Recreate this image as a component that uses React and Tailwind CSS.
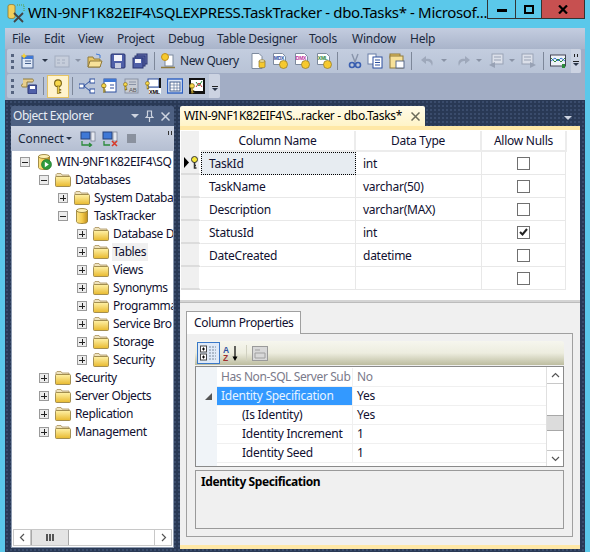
import React from 'react'

const Drop = ({ gray }) => (
  <svg width="6" height="4" viewBox="0 0 6 4" className="shrink-0"><path d="M0 0h6L3 3z" fill={gray ? '#8a93a6' : '#2a3548'} /></svg>
)

const Grip = () => (
  <div className="flex flex-col gap-[3px] ml-[4px] w-[3px] shrink-0">
    <div className="h-[3px] bg-[#56647f]" /><div className="h-[3px] bg-[#56647f]" /><div className="h-[3px] bg-[#56647f]" />
  </div>
)

const Sep = ({ cls }) => <div className={'w-px h-[18px] bg-[#7d8799] shrink-0 ' + cls} />

const Folder = () => (
  <svg width="16" height="14" viewBox="0 0 16 14" className="shrink-0">
    <defs><linearGradient id="fold" x1="0" y1="0" x2="0" y2="1"><stop offset="0" stopColor="#fff2a8" /><stop offset="1" stopColor="#e8b92e" /></linearGradient></defs>
    <path d="M1 3V1.500L2 .5h4l1 1.500h7v2H1z" fill="#efe3bd" stroke="#a8905a" strokeWidth=".8" />
    <rect x=".5" y="3.500" width="15" height="10" rx="1" fill="url(#fold)" stroke="#8f7a3c" strokeWidth=".8" />
  </svg>
)

const Db = ({ play }) => (
  <svg width="16" height="16" viewBox="0 0 16 16" className="shrink-0">
    <defs><linearGradient id="dbg" x1="0" y1="0" x2="1" y2="0"><stop offset="0" stopColor="#fbe58a" /><stop offset=".5" stopColor="#f5cc4c" /><stop offset="1" stopColor="#c08f1c" /></linearGradient></defs>
    <path d="M2.500 2.500v11c0 1 1.500 2 5.500 2s5.500-1 5.500-2v-11z" fill="url(#dbg)" stroke="#8d7428" strokeWidth=".8" />
    <ellipse cx="8" cy="2.500" rx="5.500" ry="2" fill="#fdf0b4" stroke="#8d7428" strokeWidth=".8" />
    {play && <><circle cx="10.500" cy="10.500" r="5" fill="#2e9a3c" stroke="#1c6b28" strokeWidth=".6" /><path d="M8.800 7.800l4 2.700-4 2.700z" fill="#fff" /></>}
  </svg>
)

const Key = ({ x = 0, y = 0, s = 1 }) => (
  <g transform={`translate(${x} ${y}) scale(${s})`}>
    <circle cx="4" cy="4" r="3.200" fill="#f8d84a" stroke="#7a6418" strokeWidth="1" />
    <rect x="3.300" y="6.500" width="1.800" height="7" fill="#f8d84a" stroke="#7a6418" strokeWidth=".6" />
    <rect x="5" y="9.500" width="2" height="1.300" fill="#7a6418" />
    <rect x="5" y="12" width="2" height="1.300" fill="#7a6418" />
  </g>
)

const Win = ({ children }) => (
  <svg width="16" height="16" viewBox="0 0 16 16" className="shrink-0">{children}</svg>
)

const Doc = ({ label, color = '#2c4f9e' }) => (
  <Win>
    <path d="M1.500 .5h9l3 3v8h-12z" fill="#fff" stroke="#7d8a9e" />
    <text x="1.800" y="7" fontSize="5" fontWeight="700" fill={color} fontFamily="Liberation Sans, sans-serif">{label}</text>
    <circle cx="11.500" cy="11.500" r="4" fill="#f6c92e" stroke="#8d7428" strokeWidth=".7" />
  </Win>
)

const Box = ({ minus }) => (
  <div className="w-[10px] h-[10px] border border-[#9a9a9a] bg-[#ececec] flex items-center justify-center shrink-0 relative">
    <div className="w-[6px] h-px bg-[#222]" />
    {!minus && <div className="absolute w-px h-[6px] bg-[#222]" />}
  </div>
)

const Row = ({ pad, icon, label, minus, hover }) => (
  <div className={'flex items-center h-[18px] whitespace-nowrap ' + pad}>
    <Box minus={minus} />
    <div className="w-[16px] ml-[6px] mr-[3px] flex justify-center shrink-0">{icon}</div>
    <span className={hover ? 'bg-[#f0f0f0] px-[1px] h-[18px] leading-[18px] pr-[2px]' : 'px-[1px] leading-[18px]'}>{label}</span>
  </div>
)

// labels are cut where the panel cuts them in the picture
const Tree = () => (
  <div className="flex-1 overflow-hidden pt-[2px] text-[12px] text-[#101030] tracking-[-0.4px]">
    <Row pad="pl-[8px]" minus icon={<Db play />} label="WIN-9NF1K82EIF4\SQ" />
    <Row pad="pl-[27px]" minus icon={<Folder />} label="Databases" />
    <Row pad="pl-[46px]" icon={<Folder />} label="System Databa" />
    <Row pad="pl-[46px]" minus icon={<Db />} label="TaskTracker" />
    <Row pad="pl-[65px]" icon={<Folder />} label="Database D" />
    <Row pad="pl-[65px]" hover icon={<Folder />} label="Tables" />
    <Row pad="pl-[65px]" icon={<Folder />} label="Views" />
    <Row pad="pl-[65px]" icon={<Folder />} label="Synonyms" />
    <Row pad="pl-[65px]" icon={<Folder />} label="Programma" />
    <Row pad="pl-[65px]" icon={<Folder />} label="Service Bro" />
    <Row pad="pl-[65px]" icon={<Folder />} label="Storage" />
    <Row pad="pl-[65px]" icon={<Folder />} label="Security" />
    <Row pad="pl-[27px]" icon={<Folder />} label="Security" />
    <Row pad="pl-[27px]" icon={<Folder />} label="Server Objects" />
    <Row pad="pl-[27px]" icon={<Folder />} label="Replication" />
    <Row pad="pl-[27px]" icon={<Folder />} label="Management" />
  </div>
)

const Chevron = ({ d }) => (
  <svg width="9" height="9" viewBox="0 0 9 9"><path d={d} fill="none" stroke="#555" strokeWidth="1.200" /></svg>
)

const ObjectExplorer = () => (
  <div className="w-[163px] shrink-0 flex flex-col h-[442px] mt-[6px] ml-[6px]">
    <div className="h-[20px] bg-[#4d6082] rounded-t-[2px] flex items-center pl-[2px] pr-[3px] text-[12px] text-white shrink-0">
      <span className="flex-1 text-[#e8edf5] tracking-[-0.45px]">Object Explorer</span>
      <svg width="8" height="5" viewBox="0 0 8 5" className="mr-[6px]"><path d="M0 0h8L4 4z" fill="#ced4e0" /></svg>
      <svg width="9" height="12" viewBox="0 0 9 12" className="mr-[7px]"><path d="M2.500 1h4v5l1.500 1.500H1L2.500 6zM4.500 7.500V12" fill="none" stroke="#ced4e0" strokeWidth="1.200" /></svg>
      <svg width="9" height="9" viewBox="0 0 9 9" className="mr-[1px]"><path d="M.5 .5l8 8M8.500 .5l-8 8" stroke="#ced4e0" strokeWidth="1.500" /></svg>
    </div>
    <div className="h-[25px] bg-gradient-to-b from-[#ccd3e2] to-[#b5bfd2] flex items-center shrink-0 text-[12px] text-[#1b293e]">
      <span className="ml-[7px] w-[45px] tracking-[-0.1px]">Connect</span>
      <div className="ml-[3px]"><Drop /></div>
      <div className="ml-[8px]">
        <Win>
          <rect x="1" y="1" width="9" height="7" fill="#3f78d6" stroke="#27427c" />
          <rect x="11" y="1" width="4" height="9" fill="#e6e9f0" stroke="#717a8c" strokeWidth=".7" />
          <path d="M2 10v4h9M9 12l2.500 2L9 16" fill="none" stroke="#2b8a3a" strokeWidth="1.300" />
        </Win>
      </div>
      <div className="ml-[6px]">
        <Win>
          <rect x="1" y="1" width="9" height="7" fill="#3f78d6" stroke="#27427c" />
          <rect x="11" y="1" width="4" height="9" fill="#e6e9f0" stroke="#717a8c" strokeWidth=".7" />
          <path d="M2 10v4h6" fill="none" stroke="#2b8a3a" strokeWidth="1.300" />
          <path d="M10 10l5 5M15 10l-5 5" stroke="#d83a2a" strokeWidth="1.600" />
        </Win>
      </div>
      <div className="ml-[9px] w-[9px] h-[9px] bg-[#8a919e]" />
      <div className="ml-auto mr-[2px] mb-[12px] flex gap-[2px]"><div className="w-[1px] h-[4px] bg-[#333]" /><div className="w-[1px] h-[4px] bg-[#333]" /></div>
    </div>
    <div className="flex-1 min-h-0 bg-white border-x border-b border-[#8e9bb0] flex flex-col">
      <Tree />
      <div className="h-[17px] mx-[1px] mb-[1px] flex border border-[#c8c8c8] bg-white shrink-0">
        <div className="w-[17px] flex items-center justify-center border-r border-[#c8c8c8]"><Chevron d="M6 1L2.500 4.500 6 8" /></div>
        <div className="w-[38px] bg-[#e4e4e4] border-x border-[#a8a8a8] flex items-center justify-center gap-[1px]">
          <div className="w-[2px] h-[7px] bg-[#555]" /><div className="w-[2px] h-[7px] bg-[#555]" /><div className="w-[2px] h-[7px] bg-[#555]" />
        </div>
        <div className="flex-1" />
        <div className="w-[17px] flex items-center justify-center border-l border-[#c8c8c8]"><Chevron d="M3 1l3.500 3.500L3 8" /></div>
      </div>
    </div>
  </div>
)

const columns = [
  { name: 'TaskId', type: 'int', nulls: false, focus: true },
  { name: 'TaskName', type: 'varchar(50)', nulls: false },
  { name: 'Description', type: 'varchar(MAX)', nulls: false },
  { name: 'StatusId', type: 'int', nulls: true },
  { name: 'DateCreated', type: 'datetime', nulls: false },
  { name: '', type: '', nulls: false },
]

const DesignGrid = () => (
  <div className="h-[170px] bg-white shrink-0 pl-[1px] pt-[1px] text-[12px] text-[#101030]">
    <div className="flex h-[21px]">
      <div className="w-[20px] bg-[#f0f0f0] border-r-2 border-white" />
      <div className="w-[155px] flex items-center justify-center border-r-2 border-b-2 border-[#ececec]">Column Name</div>
      <div className="w-[126px] flex items-center justify-center border-r-2 border-b-2 border-[#ececec]">Data Type</div>
      <div className="w-[85px] flex items-center justify-center border-r-2 border-b-2 border-[#ececec]">Allow Nulls</div>
    </div>
    {columns.map((c) => (
      <div key={c.name + c.type} className="flex h-[23px]">
        <div className="w-[20px] bg-[#f0f0f0] border-b-2 border-[#dcdcdc] border-r-2 border-r-white flex items-center pl-[3px]">
          {c.focus && (
            <svg width="15" height="13" viewBox="0 0 15 13">
              <path d="M0 1l5 5.500-5 5.500z" fill="#000" />
              <circle cx="10.500" cy="3.500" r="3" fill="#f8e838" stroke="#333" />
              <path d="M10.500 6v6h2M10.500 9.500h1.500" fill="none" stroke="#333" strokeWidth="1.500" />
            </svg>
          )}
        </div>
        <div className={c.focus ? 'w-[155px] flex items-center pl-[7px] pt-[1px] bg-[#e7ecf1] border border-dotted border-black' : 'w-[155px] flex items-center pl-[8px] pt-[1px] border-r border-b border-[#e8e8e8]'}>{c.name}</div>
        <div className="w-[126px] flex items-center pl-[7px] pt-[1px] border-r border-b border-[#e8e8e8]">{c.type}</div>
        <div className="w-[84px] flex items-center justify-center border-r border-b border-[#e8e8e8]">
          <div className="w-[13px] h-[13px] border border-[#707070] flex items-center justify-center bg-white">
            {c.nulls && <svg width="9" height="8" viewBox="0 0 9 8"><path d="M1 4l2.500 2.500L8 1" fill="none" stroke="#222" strokeWidth="2" /></svg>}
          </div>
        </div>
      </div>
    ))}
  </div>
)

const props = [
  { k: 'Has Non-SQL Server Sub', v: 'No', muted: true },
  { k: 'Identity Specification', v: 'Yes', sel: true },
  { k: '(Is Identity)', v: 'Yes', sub: true },
  { k: 'Identity Increment', v: '1', sub: true },
  { k: 'Identity Seed', v: '1', sub: true },
]

const ColumnProperties = () => (
  <div className="flex-1 min-h-0 bg-[#f0f0f0] flex flex-col pt-[8px] pl-[6px] pr-[7px] text-[12px]">
    <div className="w-[115px] h-[23px] bg-white border border-b-0 border-[#a0a0a0] flex items-center pl-[7px] text-[#101030] relative z-10 -mb-px shrink-0 tracking-[-0.35px]">Column Properties</div>
    <div className="h-[204px] border border-[#a0a0a0] pt-[7px] px-[8px] bg-[#f0f0f0] flex flex-col shrink-0">
      <div className="h-[24px] rounded-t-[3px] bg-gradient-to-b from-[#f6f6ee] via-[#ededdf] to-[#bdbda0] flex items-center shrink-0">
        <div className="w-[23px] h-[22px] border border-[#3a78c8] bg-[#dfeaf8] flex items-center justify-center ml-[2px]">
          <svg width="17" height="16" viewBox="0 0 17 16">
            <rect x=".5" y="1" width="6" height="6" fill="#fff" stroke="#444" /><path d="M2 4h3M3.500 2.500v3" stroke="#000" />
            <rect x=".5" y="9" width="6" height="6" fill="#fff" stroke="#444" /><path d="M2 12h3M3.500 10.500v3" stroke="#000" />
            <path d="M9 2h7M9 5h7M9 8h7M9 11h7M9 14h7" stroke="#7a8a9a" strokeDasharray="2 1" />
          </svg>
        </div>
        <svg width="16" height="17" viewBox="0 0 16 17" className="ml-[3px]">
          <text x="0" y="8" fontSize="8.500" fontWeight="700" fill="#2c4f9e" fontFamily="Liberation Sans, sans-serif">A</text>
          <text x="0" y="16" fontSize="8.500" fontWeight="700" fill="#a03030" fontFamily="Liberation Sans, sans-serif">Z</text>
          <path d="M12 1v12" stroke="#000" strokeWidth="1.200" /><path d="M9.500 11.500h5L12 16z" fill="#000" />
        </svg>
        <div className="w-px h-[16px] bg-[#d0d0c0] ml-[7px]" />
        <svg width="16" height="15" viewBox="0 0 16 15" className="ml-[5px]">
          <rect x=".5" y=".5" width="15" height="14" fill="#d8d8d8" stroke="#9a9a9a" />
          <path d="M3 4h5M3 7h10v5H3z" fill="none" stroke="#a0a0a0" />
        </svg>
      </div>
      <div className="h-[101px] mt-[1px] border border-[#8a8a8a] bg-white flex shrink-0">
        <div className="w-[21px] bg-[#f0f4f8] shrink-0 flex flex-col pt-[1px]">
          <div className="h-[19px]" />
          <div className="h-[19px] flex items-center justify-center pl-[4px]"><svg width="7" height="7" viewBox="0 0 7 7"><path d="M7 0v7H0z" fill="#555" /></svg></div>
        </div>
        <div className="flex-1 flex flex-col pt-[1px]">
          {props.map((p) => (
            <div key={p.k} className="flex h-[19px] border-b border-[#f0f0f0]">
              <div className={'w-[136px] flex items-center whitespace-nowrap overflow-hidden border-r border-[#f0f0f0] ' + (p.sub ? 'pl-[25px] ' : 'pl-[4px] ') + (p.sel ? 'bg-[#3399ff] text-[#e8f4ff]' : p.muted ? 'text-[#7a7a8a] tracking-[-0.4px]' : 'text-[#101030]')}>{p.k}</div>
              <div className={'flex items-center pl-[4px] ' + (p.muted ? 'text-[#7a7a8a]' : 'text-[#101030]')}>{p.v}</div>
            </div>
          ))}
        </div>
        <div className="w-[17px] border-l border-[#e0e0e0] flex flex-col shrink-0">
          <div className="h-[17px] flex items-center justify-center border-b border-[#c8c8c8]"><Chevron d="M1 6l3.500-3.500L8 6" /></div>
          <div className="h-[31px]" />
          <div className="h-[16px] bg-[#dcdcdc] border-y border-[#a8a8a8]" />
          <div className="h-[19px]" />
          <div className="flex-1 flex items-center justify-center border-t border-[#c8c8c8]"><Chevron d="M1 3l3.500 3.500L8 3" /></div>
        </div>
      </div>
      <div className="mt-[3px] h-[59px] border border-[#9a9a9a] bg-[#f0f0f0] pl-[5px] pt-[2px] font-bold text-black shrink-0 tracking-[-0.4px]">Identity Specification</div>
    </div>
  </div>
)

const Designer = () => (
  <div className="w-[400px] shrink-0 flex flex-col mt-[6px] ml-[6px] h-[443px] relative">
    <div className="h-[20px] w-[245px] bg-gradient-to-b from-[#fffbe8] to-[#fff4c8] rounded-t-[2px] flex items-center pl-[4px] text-[12px] text-black shrink-0 whitespace-nowrap tracking-[-0.3px]">
      <span className="w-[226px]">WIN-9NF1K82EIF4\S...racker - dbo.Tasks*</span>
      <svg width="9" height="9" viewBox="0 0 9 9" className="ml-[1px]"><path d="M.5 .5l8 8M8.500 .5l-8 8" stroke="#6a6a5a" strokeWidth="1.500" /></svg>
    </div>
    <svg width="8" height="5" viewBox="0 0 8 5" className="absolute right-[8px] top-[10px]"><path d="M0 0h8L4 4z" fill="#ced4e0" /></svg>
    <div className="h-[4px] bg-[#ffe8a6] shrink-0" />
    <DesignGrid />
    <div className="h-[3px] bg-[#d4d4d4] border-b border-[#bcbcbc] shrink-0" />
    <ColumnProperties />
    <div className="h-[4px] bg-[#ffe8a6] shrink-0" />
  </div>
)

const Toolbar1 = () => (
  <div className="h-[24px] ml-[2px] mr-[4px] bg-gradient-to-b from-[#c3cddf] to-[#b8c3d6] rounded-[2px] flex items-center text-[12px] text-[#1b293e]">
    <Grip />
    <div className="ml-[7px]"><Win><rect x="1" y="3" width="11" height="12" fill="#dfe8f6" stroke="#46618e" /><rect x="1" y="3" width="11" height="3" fill="#3f78d6" /><path d="M4 8h6M4 10.500h6" stroke="#46618e" /><path d="M3 0l1 2 2 1-2 1-1 2-1-2-2-1 2-1z" fill="#f8d030" /></Win></div>
    <div className="ml-[5px]"><Drop /></div>
    <div className="ml-[6px] opacity-50"><Win><rect x="1" y="3" width="14" height="11" fill="#d0d4dc" stroke="#8a93a6" /><path d="M3 7h3M8 7h3M3 10h3M8 10h3" stroke="#8a93a6" /></Win></div>
    <div className="ml-[5px]"><Drop gray /></div>
    <div className="ml-[6px]"><Win><path d="M1 4h5l1 2h6v8H1z" fill="#e8c667" stroke="#8f7a3c" /><path d="M3 8h12l-2 6H1z" fill="#f7e199" stroke="#8f7a3c" /><path d="M9 1l4 1v3" fill="none" stroke="#3f78d6" /></Win></div>
    <div className="ml-[7px]"><Win><rect x="1" y="1" width="14" height="14" rx="1" fill="#4f5fa8" stroke="#2a3570" /><rect x="4" y="2" width="8" height="6" fill="#f4f4fa" /><rect x="5" y="10" width="6" height="5" fill="#c8cde0" /></Win></div>
    <div className="ml-[6px]"><Win><rect x="5" y="1" width="10" height="10" fill="#6874b4" stroke="#2a3570" /><rect x="3" y="3" width="10" height="10" fill="#5867ae" stroke="#2a3570" /><rect x="1" y="5" width="10" height="10" fill="#4f5fa8" stroke="#2a3570" /><rect x="3" y="6" width="6" height="4" fill="#f4f4fa" /></Win></div>
    <Sep cls="ml-[6px]" />
    <div className="ml-[5px]"><Win><rect x="5" y="2" width="8" height="11" fill="#fff" stroke="#7d8a9e" /><circle cx="5" cy="4" r="3.500" fill="#f6c92e" stroke="#c08f1c" /><path d="M1 14.500h14" stroke="#8f7a3c" strokeWidth="1.500" /></Win></div>
    <span className="ml-[4px] w-[60px] whitespace-nowrap tracking-[-0.45px]">New Query</span>
    <div className="ml-[10px]"><Win><path d="M2 .5h7l3 3v12H2z" fill="#fff" stroke="#7d8a9e" /><path d="M9 8v6c0 1 6 1 6 0V8z" fill="#f6c92e" stroke="#8d7428" strokeWidth=".7" /><ellipse cx="12" cy="8" rx="3" ry="1.200" fill="#fdf0b4" stroke="#8d7428" strokeWidth=".7" /></Win></div>
    <div className="ml-[6px]"><Doc label="MDX" /></div>
    <div className="ml-[6px]"><Doc label="DMX" color="#c030a0" /></div>
    <div className="ml-[6px]"><Doc label="XML" color="#2b8a3a" /></div>
    <Sep cls="ml-[5px]" />
    <div className="ml-[9px]"><Win><path d="M5 1l3 8 3-8" fill="none" stroke="#8894aa" strokeWidth="1.400" /><circle cx="5" cy="12" r="2.500" fill="none" stroke="#3a5fb0" strokeWidth="1.600" /><circle cx="11" cy="12" r="2.500" fill="none" stroke="#3a5fb0" strokeWidth="1.600" /></Win></div>
    <div className="ml-[4px]"><Win><rect x="1" y="1" width="8" height="10" fill="#fff" stroke="#6a7fa8" /><rect x="6" y="4" width="9" height="11" fill="#fff" stroke="#2c4f9e" /><path d="M8 7h5M8 9.500h5M8 12h5" stroke="#2c4f9e" /></Win></div>
    <div className="ml-[6px]"><Win><rect x="1" y="1" width="10" height="4" fill="#e8c667" stroke="#8f7a3c" /><rect x="1" y="3" width="13" height="12" fill="#f7e199" stroke="#8f7a3c" /><rect x="7" y="8" width="8" height="7" fill="#fff" stroke="#5a6a8a" /></Win></div>
    <Sep cls="ml-[6px]" />
    <div className="ml-[8px] opacity-60"><Win><path d="M12 13c2-5-1-8-6-7V3L1 7l5 4V8c3 0 5 1 6 5z" fill="#8a93a6" /></Win></div>
    <div className="ml-[5px]"><Drop gray /></div>
    <div className="ml-[8px] opacity-60"><Win><path d="M4 13C2 8 5 5 10 6V3l5 4-5 4V8c-3 0-5 1-6 5z" fill="#8a93a6" /></Win></div>
    <div className="ml-[5px]"><Drop gray /></div>
    <div className="ml-[6px] opacity-70"><Win><rect x="4" y="1" width="11" height="10" fill="#e8eaf0" stroke="#8a93a6" /><path d="M6 4h7M6 7h7" stroke="#8a93a6" /><path d="M7 9v6l-6-3z" fill="#8a93a6" /></Win></div>
    <div className="ml-[5px]"><Drop gray /></div>
    <div className="ml-[6px] opacity-70"><Win><rect x="1" y="1" width="11" height="10" fill="#e8eaf0" stroke="#8a93a6" /><path d="M3 4h7M3 7h7" stroke="#8a93a6" /><path d="M9 9v6l6-3z" fill="#8a93a6" /></Win></div>
    <Sep cls="ml-[6px]" />
    <div className="ml-[6px]"><Win><rect x=".5" y="2" width="15" height="11" fill="#eef2f8" stroke="#445" /><path d="M1 5l4 4 3-3 3 3 4-4" fill="none" stroke="#2b8a3a" /><path d="M1 8l4-3 3 3 3-3 4 3" fill="none" stroke="#3f78d6" /><rect x="12" y="11" width="3" height="4" fill="#2b8a3a" /></Win></div>
    <div className="ml-auto w-[10px] h-full bg-[#ccd3e2] rounded-r-[2px] flex flex-col items-center pt-[5px]">
      <div className="flex gap-[2px]"><div className="w-px h-[3px] bg-[#222]" /><div className="w-px h-[3px] bg-[#222]" /></div>
      <div className="w-[6px] h-px bg-[#222] mt-[4px]" />
      <div className="mt-[1px]"><Drop /></div>
    </div>
  </div>
)

const Toolbar2 = () => (
  <div className="h-[24px] w-[213px] mx-[2px] mt-px bg-[#bac5d8] rounded-[2px] flex items-center">
    <Grip />
    <div className="ml-[7px]"><Win><path d="M2 1h9c2 0 2 3 0 3H6v5H2c-2 0-2-3 0-3" fill="#e8cf8c" stroke="#8f7a3c" /><rect x="7" y="7" width="9" height="9" rx="1" fill="#4f5fa8" stroke="#2a3570" /><rect x="9" y="8" width="5" height="3" fill="#fff" /></Win></div>
    <Sep cls="ml-[6px]" />
    <div className="ml-[3px] w-[22px] h-[23px] bg-[#fff3cd] border border-[#e5c365] flex items-center justify-center">
      <svg width="10" height="15" viewBox="0 0 8 14"><Key /></svg>
    </div>
    <Sep cls="ml-[3px]" />
    <div className="ml-[6px]"><Win><rect x="0" y="6" width="5" height="4" fill="#fff" stroke="#2c4f9e" /><rect x="11" y="1" width="5" height="4" fill="#fff" stroke="#2c4f9e" /><rect x="11" y="11" width="5" height="4" fill="#fff" stroke="#2c4f9e" /><path d="M5 8l6-5M5 8l6 5" stroke="#2c4f9e" /></Win></div>
    <div className="ml-[6px]"><Win><rect x="3" y="1" width="12" height="13" fill="#fff" stroke="#2c4f9e" /><rect x="3" y="1" width="12" height="3" fill="#3f78d6" /><path d="M9 7h4M9 10h4" stroke="#2c4f9e" /><Key x={0} y={5} s={0.7} /></Win></div>
    <div className="ml-[6px]"><Win><rect x="2" y="1" width="13" height="14" fill="#c8ccd4" stroke="#8a93a6" /><path d="M6 4h7M6 6.500h7" stroke="#8a93a6" /><text x="6" y="14" fontSize="6" fill="#555" fontFamily="Liberation Sans, sans-serif">AB</text><Key x={0} y={4} s={0.6} /></Win></div>
    <div className="ml-[6px]"><Win><rect x="3" y="1" width="11" height="8" fill="#fff" stroke="#2c4f9e" /><rect x="14" y="0" width="2" height="16" fill="#111" /><rect x="4" y="10" width="12" height="6" fill="#fff" /><text x="4" y="15.500" fontSize="5.500" fontWeight="700" fill="#000" fontFamily="Liberation Sans, sans-serif">XML</text><Key x={0} y={3} s={0.6} /></Win></div>
    <div className="ml-[6px]"><Win><rect x=".5" y="1" width="15" height="14" fill="#dfe8f6" stroke="#2c5fc0" strokeWidth="1.400" /><rect x="3" y="4" width="10" height="9" fill="#fff" stroke="#46618e" /><path d="M3 7h10M3 10h10M7 4v9M10 4v9" stroke="#46618e" strokeWidth=".6" /></Win></div>
    <div className="ml-[6px]"><Win><rect x="0" y="0" width="16" height="16" fill="#111" /><rect x="2" y="2" width="12" height="11" fill="#fff" /><path d="M7 4l3 4 3-5" fill="none" stroke="#2b8a3a" /><path d="M7 9l3-4 3 4" fill="none" stroke="#c03030" /><Key x={0} y={5} s={0.75} /></Win></div>
    <div className="ml-auto w-[11px] h-full bg-[#ccd3e2] rounded-r-[2px] flex flex-col items-center justify-end pb-[6px]">
      <div className="w-[6px] h-px bg-[#222] mb-[1px]" />
      <Drop />
    </div>
  </div>
)

const menuItems = [
  ['File', 'w-[32px]'], ['Edit', 'w-[34px]'], ['View', 'w-[39px]'], ['Project', 'w-[51px]'], ['Debug', 'w-[49px]'],
  ['Table Designer', 'w-[92px]'], ['Tools', 'w-[43px]'], ['Window', 'w-[58px]'], ['Help', 'w-[40px]'],
]

export default function App() {
  return (
    <div className="w-[590px] h-[552px] overflow-hidden bg-[#5bc8ea] flex flex-col font-['Noto_Sans',sans-serif] tracking-[-0.25px]">
      <div className="h-[28px] flex shrink-0">
        <div className="w-[28px] pl-[7px] pt-[4px] shrink-0">
          <svg width="18" height="19" viewBox="0 0 18 19">
            <path d="M1 2c0-2 7-2 7 0v11c0 2-7 2-7 0z" fill="#f2cf5c" stroke="#8d7428" strokeWidth=".8" />
            <path d="M10 1h7v7" fill="none" stroke="#5c9a3c" strokeDasharray="1 1" />
            <path d="M7 9l9 9M16 9l-9 9" stroke="#444" strokeWidth="1.800" />
          </svg>
        </div>
        <div className="w-[459px] text-[15px] leading-[24px] text-black whitespace-nowrap overflow-hidden tracking-[-0.35px]">WIN-9NF1K82EIF4\SQLEXPRESS.TaskTracker - dbo.Tasks* - Microsof...</div>
        <div className="w-[29px] h-[19px] border border-t-0 border-[#333] flex items-center justify-center"><div className="w-[10px] h-[3px] bg-black mt-[3px]" /></div>
        <div className="w-[25px] h-[19px] border-b border-[#333] flex items-center justify-center"><div className="w-[10px] h-[9px] border-2 border-black" /></div>
        <div className="w-[44px] h-[19px] bg-[#c75050] border-x border-b border-[#333] flex items-center justify-center">
          <svg width="10" height="9" viewBox="0 0 10 9"><path d="M1 .5l8 8M9 .5l-8 8" stroke="#000" strokeWidth="2.200" /></svg>
        </div>
      </div>
      <div className="flex-1 min-h-0 mx-[5px] flex flex-col bg-[#293955] bg-[radial-gradient(#3a4c6c_1px,transparent_1px)] bg-[length:4px_4px]">
        <div className="h-[72px] bg-[#a2adc5] shrink-0 rounded-t-[2px]">
          <div className="h-[21px] flex items-center pl-[7px] bg-gradient-to-b from-[#c4cde0] to-[#a9b4ca] text-[12px] text-[#1b293e] whitespace-nowrap">
            {menuItems.map(([m, w]) => <span key={m} className={w}>{m}</span>)}
          </div>
          <Toolbar1 />
          <Toolbar2 />
        </div>
        <div className="flex-1 min-h-0 flex items-start">
          <ObjectExplorer />
          <Designer />
        </div>
      </div>
    </div>
  )
}
